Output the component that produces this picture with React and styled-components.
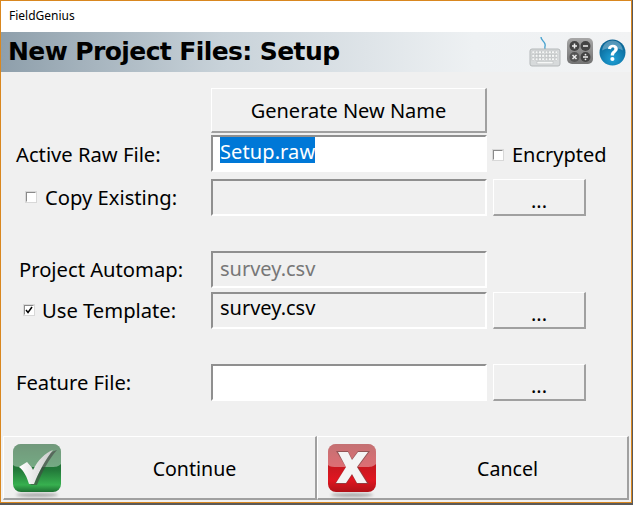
import React from "react";
import styled, { createGlobalStyle } from "styled-components";

const Global = createGlobalStyle`
  html, body { margin: 0; padding: 0; background: #5a5a5a; }
  body { width: 633px; height: 505px; overflow: hidden; font-family: "DejaVu Sans", "Liberation Sans", sans-serif; }
`;
const Screen = styled.div`
  width: 632px; height: 503px; box-sizing: border-box;
  border: 1px solid #d9871f; background: #f0f0f0;
  display: flex; flex-direction: column; color: #000;
`;
const TitleBar = styled.div`
  height: 31px; flex: none; background: #fff; display: flex; align-items: center;
  padding-left: 8px; font: 12px "Noto Sans", "Open Sans", sans-serif; padding-bottom: 2px; box-sizing: border-box;
`;
const Header = styled.div`
  height: 40px; flex: none; display: flex; align-items: center; justify-content: space-between;
  padding: 0 5px 0 7px; background: linear-gradient(90deg, #8e9fab 0%, #c8d2d9 35%, #eef1f3 75%, #f2f3f4 100%);
`;
const Heading = styled.h1`
  margin: 0 0 2px; font: bold 25px "DejaVu Sans", sans-serif; letter-spacing: -0.6px; white-space: nowrap;
`;
const Tools = styled.div`display: flex; align-items: center; gap: 5px;`;
const Form = styled.div`
  flex: 1; display: flex; flex-direction: column; padding: 16px 0 0 0; min-height: 0;
`;
const Row = styled.div`
  display: grid; grid-template-columns: 204px 276px 93px; column-gap: 6px;
  height: ${p => p.$h || 37}px; margin-top: ${p => p.$mt || 0}px; align-items: stretch;
`;
const Label = styled.label`
  display: flex; align-items: center; gap: ${p => p.$gap || 0}px; padding-left: ${p => p.$pl}px;
  padding-bottom: ${p => p.$pb ?? 2}px;
  font: 20.2px "Noto Sans", "Open Sans", sans-serif; white-space: nowrap;
`;
const Box = styled.span`
  width: 10px; height: 10px; flex: none; box-sizing: border-box; background: #fff;
  border: 1px solid; border-color: #8a8a8a #fff #fff #8a8a8a; outline: 1px solid #d8d8d8;
  display: flex; align-items: center; justify-content: center;
`;
const Field = styled.div`
  box-sizing: border-box; display: flex; align-items: flex-start; padding: ${p => p.$up ? 1 : 3}px 0 0 7px;
  border: 2px solid; border-color: #8f8f8f #fff #fff #8f8f8f;
  background: ${p => p.$white ? "#fff" : "#f0f0f0"};
  color: ${p => p.$muted ? "#777" : "#000"};
  font: 20px "Noto Sans", "Open Sans", sans-serif; line-height: 26px;
`;
const Selected = styled.span`
  background: #0078d7; color: #fff; line-height: 25px; height: 24px; padding-top: 2px; margin-top: -3px; letter-spacing: 0.1px;
`;
const Raised = styled.button`
  box-sizing: border-box; padding: 0; margin: 0; background: #f0f0f0; color: #000;
  border: 2px solid; border-color: #fff #a0a0a0 #a0a0a0 #fff; border-width: 1px 2px 2px 1px;
  font: 20px "Noto Sans", "Open Sans", sans-serif;
`;
const Dots = styled(Raised)`padding-top: 6px;`;
const Check = styled.label`
  display: flex; align-items: center; gap: 9px; padding-top: 2px; font: 20px "Noto Sans", "Open Sans", sans-serif; white-space: nowrap;
`;
const Footer = styled.div`
  display: grid; grid-template-columns: 314px 312px; margin: auto 0 2px 2px; height: 64px;
`;
const FootButton = styled(Raised)`
  position: relative; display: flex; align-items: center; justify-content: center;
  padding-left: ${p => p.$pl}px; padding-top: 2px; font-size: 19.6px;
`;
const Badge = styled.svg`position: absolute; left: ${p => p.$left}px; top: 6px;`;

const Keyboard = () => (
  <svg width="32" height="32" viewBox="0 0 32 32">
    <path d="M12 1c0 3 3 4 4 7s-2 4 1 6" fill="none" stroke="#4aa3cf" strokeWidth="1.4" />
    <rect x="1" y="13" width="30" height="17" rx="2" fill="#d7dadb" stroke="#b5b9ba" />
    {[15, 18.5, 22].map(y => Array.from({ length: 8 }).map((_, i) => (
      <rect key={`${y}${i}`} x={3 + i * 3.3} y={y} width="2.6" height="2.6" fill="#f6f7f7" stroke="#aeb2b3" strokeWidth=".4" />
    )))}
    <rect x="8" y="25.5" width="16" height="2.4" fill="#f6f7f7" stroke="#aeb2b3" strokeWidth=".4" />
  </svg>
);
const Calc = () => (
  <svg width="28" height="30" viewBox="0 0 28 30">
    <defs><linearGradient id="cg" x1="0" y1="0" x2="0" y2="1"><stop offset="0" stopColor="#a8a8a8" /><stop offset="1" stopColor="#727272" /></linearGradient></defs>
    <rect x="1" y="1" width="26" height="26" rx="5" fill="url(#cg)" />
    <circle cx="8.500" cy="9" r="5" fill="#444" /><circle cx="19.500" cy="9" r="5" fill="#444" />
    <circle cx="8.500" cy="20" r="5" fill="#555" /><circle cx="19.500" cy="20" r="5" fill="#444" />
    <g stroke="#eee" strokeWidth="1.5" fill="none">
      <path d="M6 9h5M8.500 6.500v5M17 9h5M6.500 18l4 4M10.500 18l-4 4M17 20h5" />
    </g>
    <circle cx="19.500" cy="17.700" r=".9" fill="#eee" /><circle cx="19.500" cy="22.300" r=".9" fill="#eee" />
  </svg>
);
const Help = () => (
  <svg width="27" height="27" viewBox="0 0 26 26">
    <defs><radialGradient id="hg" cx=".5" cy=".75" r=".8"><stop offset="0" stopColor="#1fa2d8" /><stop offset="1" stopColor="#045a8a" /></radialGradient></defs>
    <circle cx="13" cy="13" r="12.500" fill="url(#hg)" />
    <path d="M3 11C4 4 9 1.500 13 1.500S22 4 23 11C17 8 9 8 3 11Z" fill="#fff" opacity=".3" />
    <path d="M8.500 9.500C9 6.500 11 5.500 13.300 5.500c3 0 4.800 1.700 4.800 4 0 3.400-3.600 3.400-3.600 6.500h-3.200c0-4.400 3.500-4.300 3.500-6.500 0-1-.6-1.600-1.500-1.600-1 0-1.500.6-1.700 2Z" fill="#fff" />
    <circle cx="12.900" cy="19.300" r="2" fill="#fff" />
  </svg>
);
const Ok = () => (
  <Badge $left={8} width="50" height="58" viewBox="0 0 50 58">
    <defs>
      <linearGradient id="ok" x1="0" y1="0" x2="0" y2="1"><stop offset="0" stopColor="#1a5a2b" /><stop offset=".55" stopColor="#237a3a" /><stop offset=".85" stopColor="#37b04f" /><stop offset="1" stopColor="#1f7033" /></linearGradient>
      <linearGradient id="okw" x1="0" y1="0" x2="1" y2="0"><stop offset="0" stopColor="#fff" /><stop offset="1" stopColor="#c9c9c9" /></linearGradient>
      <filter id="sh"><feGaussianBlur stdDeviation="1.500" /></filter>
    </defs>
    <ellipse cx="25" cy="52" rx="21" ry="2" fill="#aaa" filter="url(#sh)" />
    <rect x="1" y="1" width="48" height="48" rx="8" fill="url(#ok)" />
    <path d="M1 22V9a8 8 0 0 1 8-8h32a8 8 0 0 1 8 8v12c-3 3-6 3-10 3H11C6 24 3 24 1 22Z" fill="#fff" opacity=".38" />
    <path d="M7 24l8-5c2 2 5 5 6 8C26 17 34 9 44 6c-8 9-15 22-20 35h-6C16 34 12 28 7 24Z" fill="#444" opacity=".6" transform="translate(1 1)" />
    <path d="M7 24l8-5c2 2 5 5 6 8C26 17 33 10 41 7c-7 9-14 21-19 34h-5C15 34 12 28 7 24Z" fill="url(#okw)" />
  </Badge>
);
const No = () => (
  <Badge $left={9} width="50" height="58" viewBox="0 0 50 58">
    <defs>
      <linearGradient id="no" x1="0" y1="0" x2="0" y2="1"><stop offset="0" stopColor="#a01a1e" /><stop offset=".75" stopColor="#e01620" /><stop offset="1" stopColor="#b01319" /></linearGradient>
      <filter id="sh2"><feGaussianBlur stdDeviation="1.500" /></filter>
    </defs>
    <ellipse cx="25" cy="52" rx="21" ry="2" fill="#aaa" filter="url(#sh2)" />
    <rect x="1" y="1" width="48" height="48" rx="8" fill="url(#no)" />
    <path d="M1 22V9a8 8 0 0 1 8-8h32a8 8 0 0 1 8 8v12c-3 3-6 3-10 3H11C6 24 3 24 1 22Z" fill="#fff" opacity=".38" />
    <path d="M9 8h12l4 8 6-8h12L31 24l11 17H30l-5-9-6 9H8l11-17Z" fill="#7a4a4a" opacity=".7" />
    <path d="M11 9h10l4 8 6-8h10L30 24l10 16H30l-5-9-6 9H9l10-16Z" fill="#f4f4f4" />
  </Badge>
);

export default function App() {
  return (
    <>
      <Global />
      <Screen>
        <TitleBar>FieldGenius</TitleBar>
        <Header>
          <Heading>New Project Files: Setup</Heading>
          <Tools><Keyboard /><Calc /><Help /></Tools>
        </Header>
        <Form>
          <Row $h={45}>
            <span />
            <Raised>Generate New Name</Raised>
          </Row>
          <Row $mt={2}>
            <Label $pl={15} $pb={0}>Active Raw File:</Label>
            <Field $white><Selected>Setup.raw</Selected></Field>
            <Check><Box />Encrypted</Check>
          </Row>
          <Row $mt={7}>
            <Label $pl={25} $gap={9}><Box />Copy Existing:</Label>
            <Field />
            <Dots>...</Dots>
          </Row>
          <Row $mt={35}>
            <Label $pl={18}>Project Automap:</Label>
            <Field $muted>survey.csv</Field>
          </Row>
          <Row $mt={4}>
            <Label $pl={23} $gap={8}>
              <Box>
                <svg width="8" height="8" viewBox="0 0 8 8"><path d="M1 4l2 2.500L7 1" fill="none" stroke="#000" strokeWidth="1.500" /></svg>
              </Box>
              Use Template:
            </Label>
            <Field $up>survey.csv</Field>
            <Dots>...</Dots>
          </Row>
          <Row $mt={35}>
            <Label $pl={15}>Feature File:</Label>
            <Field $white />
            <Dots>...</Dots>
          </Row>
          <Footer>
            <FootButton $pl={70}><Ok />Continue</FootButton>
            <FootButton $pl={70}><No />Cancel</FootButton>
          </Footer>
        </Form>
      </Screen>
    </>
  );
}
